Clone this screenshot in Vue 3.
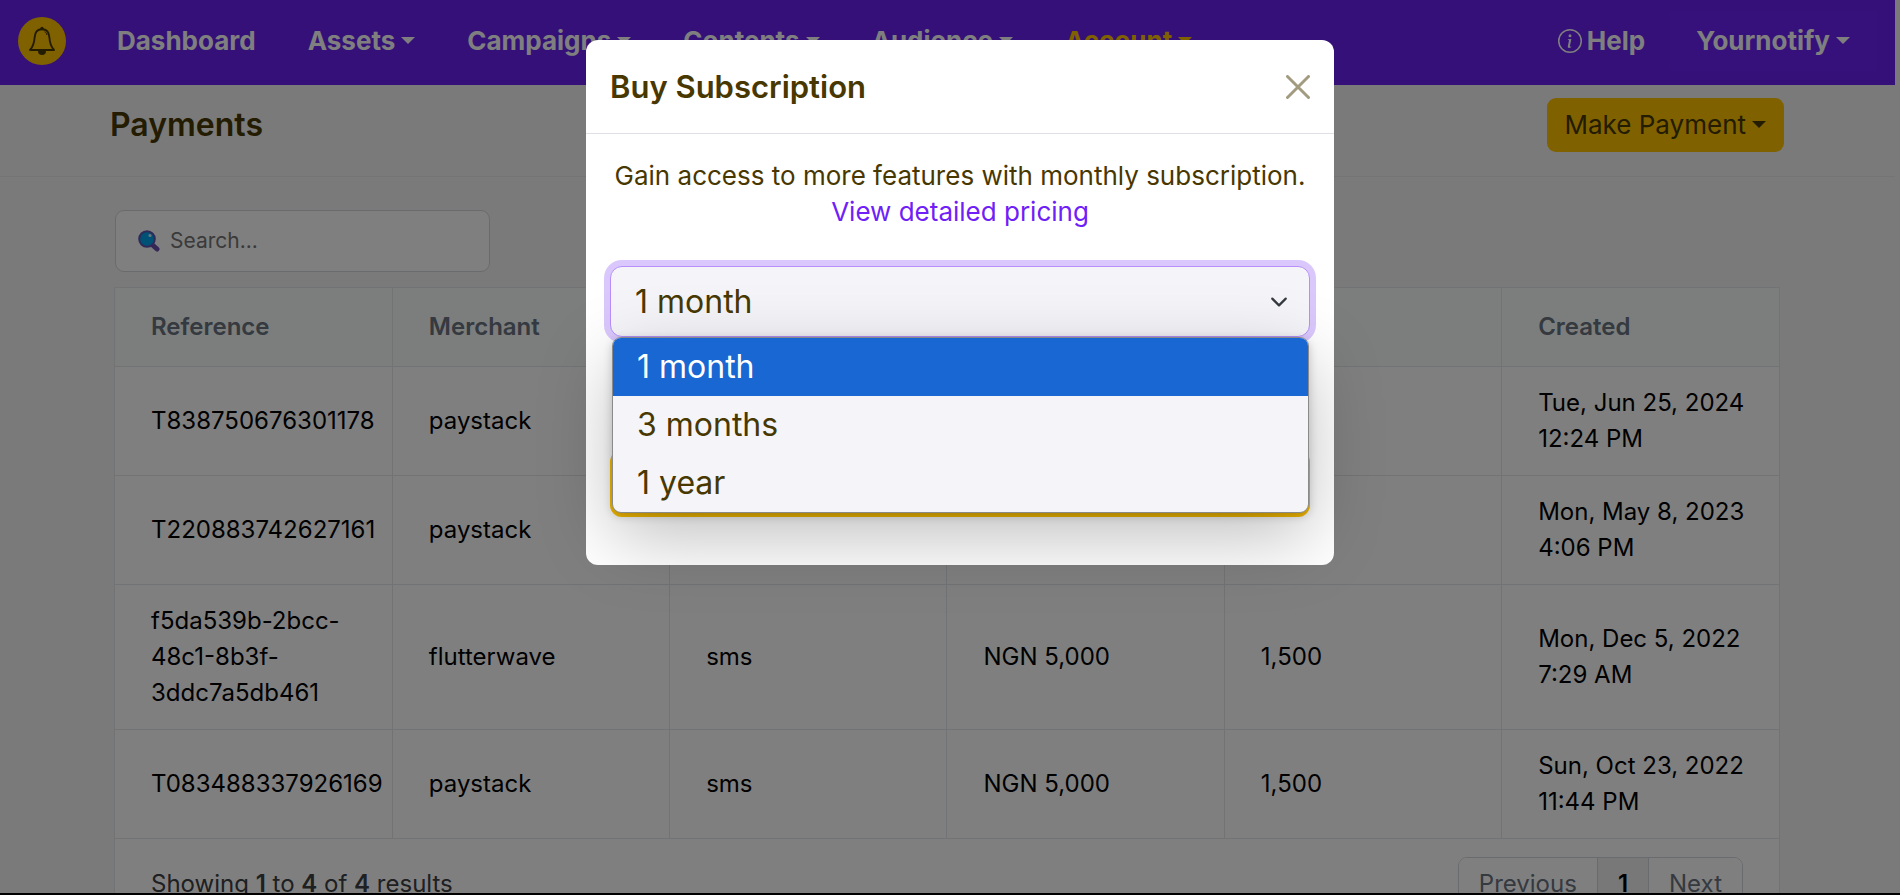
<script setup>
import { ref } from 'vue'

const term = ref('1 month')
const query = ref('')
const terms = ['1 month', '3 months', '1 year']
const links = [
  { label: 'Dashboard', menu: false },
  { label: 'Assets', menu: true },
  { label: 'Campaigns', menu: true },
  { label: 'Contents', menu: true },
  { label: 'Audience', menu: true },
  { label: 'Account', menu: true, active: true },
]
const columns = ['Reference', 'Merchant', 'Type', 'Amount', 'Units', 'Created']
const rows = [
  ['T838750676301178', 'paystack', 'sms', 'NGN 5,000', '1,500', 'Tue, Jun 25, 2024 12:24 PM'],
  ['T220883742627161', 'paystack', 'sms', 'NGN 5,000', '1,500', 'Mon, May 8, 2023 4:06 PM'],
  ['f5da539b-2bcc-48c1-8b3f-3ddc7a5db461', 'flutterwave', 'sms', 'NGN 5,000', '1,500', 'Mon, Dec 5, 2022 7:29 AM'],
  ['T083488337926169', 'paystack', 'sms', 'NGN 5,000', '1,500', 'Sun, Oct 23, 2022 11:44 PM'],
]
</script>

<template>
  <div class="screen">
    <div class="page">
      <header class="navbar">
        <a class="brand" href="#" aria-label="Home">
          <svg viewBox="0 0 48 48" width="48" height="48">
            <circle cx="24" cy="24" r="24" fill="#ffc200" />
            <path d="M12 33c3.200-3.500 4.300-7.500 4.600-12.500c.3-5.300 3-8.300 7.400-8.300s7.100 3 7.400 8.300c.3 5 1.400 9 4.600 12.500z" fill="none" stroke="#483800" stroke-width="1.900" stroke-linejoin="round" />
            <path d="M26.500 14.800c1.500.6 2.200 1.700 2.400 3.200" fill="none" stroke="#483800" stroke-width="1" />
            <circle cx="24" cy="11.500" r="1.700" fill="#483800" />
            <path d="M20 34h8a4 4 0 0 1-8 0z" fill="#483800" />
          </svg>
        </a>
        <nav class="links">
          <a v-for="l in links" :key="l.label" href="#" :class="['link', { active: l.active }]">{{ l.label }}<span v-if="l.menu" class="caret"></span></a>
        </nav>
        <div class="right">
          <a class="help" href="#">
            <svg viewBox="0 0 16 16" width="24" height="24" fill="currentColor">
              <path d="M8 15A7 7 0 1 1 8 1a7 7 0 0 1 0 14m0 1A8 8 0 1 0 8 0a8 8 0 0 0 0 16" />
              <path d="m8.930 6.588-2.290.287-.082.380.450.083c.294.070.352.176.288.469l-.738 3.468c-.194.897.105 1.319.808 1.319.545 0 1.178-.252 1.465-.598l.088-.416c-.2.176-.492.246-.686.246-.275 0-.375-.193-.304-.533zM9 4.500a1 1 0 1 1-2 0 1 1 0 0 1 2 0" />
            </svg>Help</a>
          <button class="user" type="button">Yournotify<span class="caret"></span></button>
        </div>
      </header>

      <section class="heading">
        <h1>Payments</h1>
        <button class="pay" type="button">Make Payment<span class="caret"></span></button>
      </section>

      <main class="content">
        <label class="search">
          <svg viewBox="0 0 22 22" width="22" height="22">
            <path d="M14.500 15l4.500 4" stroke="#6a4fb0" stroke-width="5" stroke-linecap="round" />
            <circle cx="9" cy="9" r="7.800" fill="#00a2ed" stroke="#5f55b0" stroke-width="2" />
            <circle cx="12" cy="5.500" r="1.500" fill="#d8f2ff" />
          </svg>
          <input v-model="query" type="text" placeholder="Search..." aria-label="Search" />
        </label>
        <div class="card">
          <table>
            <thead>
              <tr><th v-for="c in columns" :key="c">{{ c }}</th></tr>
            </thead>
            <tbody>
              <tr v-for="r in rows" :key="r[0]"><td v-for="(c, i) in r" :key="i">{{ c }}</td></tr>
            </tbody>
          </table>
          <footer class="foot">
            <div>Showing <b>1</b> to <b>4</b> of <b>4</b> results</div>
            <div class="pages">
              <button type="button">Previous</button><button type="button" class="current">1</button><button type="button">Next</button>
            </div>
          </footer>
        </div>
      </main>
    </div>

    <div class="backdrop">
      <div class="modal" role="dialog" aria-labelledby="dialog-title">
        <div class="modal-head">
          <h2 id="dialog-title">Buy Subscription</h2>
          <button class="close" type="button" aria-label="Close">
            <svg viewBox="0 0 24 24" width="24" height="24"><path d="M1.500 1.500l21 21M22.500 1.500l-21 21" stroke="currentColor" stroke-width="3" stroke-linecap="round" /></svg>
          </button>
        </div>
        <div class="modal-body">
          <p>Gain access to more features with monthly subscription.<br /><a href="#">View detailed pricing</a></p>
          <div class="picker">
            <select v-model="term" aria-label="Subscription period">
              <option v-for="t in terms" :key="t">{{ t }}</option>
            </select>
            <svg class="chevron" viewBox="0 0 16 16" width="18" height="18"><path d="m2 5 6 6 6-6" fill="none" stroke="#343a40" stroke-width="2" stroke-linecap="round" stroke-linejoin="round" /></svg>
            <ul class="options" role="listbox">
              <li v-for="t in terms" :key="t" role="option" :aria-selected="t === term" :class="{ chosen: t === term }" @click="term = t">{{ t }}</li>
            </ul>
          </div>
          <button class="buy" type="button" aria-label="Buy"></button>
        </div>
      </div>
    </div>
  </div>
</template>

<style>
body {
  margin: 0;
}
</style>

<style scoped>
* {
  box-sizing: border-box;
}
.screen {
  position: relative;
  height: 100vh;
  overflow: hidden;
  background: #f4f4f4;
  border-bottom: 2px solid #000;
  color: #483800;
  font: 400 24px/36px Inter, "Open Sans", sans-serif;
}
button {
  font: inherit;
  color: inherit;
  border: 0;
  cursor: pointer;
}
a {
  text-decoration: none;
}
.page {
  padding-right: 5px;
}
.caret {
  display: inline-block;
  margin-left: 6px;
  vertical-align: 6px;
  border-top: 7px solid;
  border-left: 7px solid transparent;
  border-right: 7px solid transparent;
}
.navbar {
  display: flex;
  align-items: center;
  height: 85px;
  padding: 0 18px 4px;
  background: #6820f0;
  color: #fff;
  font-size: 26px;
  font-weight: 700;
}
.brand,
.brand svg {
  display: block;
}
.links {
  display: flex;
  gap: 52px;
  margin-left: 51px;
}
.link,
.help {
  color: #fff;
}
.active {
  color: #ffc200;
}
.right {
  display: flex;
  align-items: center;
  gap: 24px;
  margin-left: auto;
}
.help {
  display: flex;
  align-items: center;
  gap: 5px;
}
.user {
  padding: 12px 27px;
  background: #6c21f6;
  font-weight: 700;
}
.heading {
  display: flex;
  align-items: center;
  justify-content: space-between;
  height: 92px;
  padding: 0 111px 12px 110px;
  border-bottom: 1px solid #e8e8e8;
}
h1,
h2 {
  margin: 0;
  font-size: 32px;
  line-height: 45px;
  font-weight: 600;
}
h2 {
  font-size: 31px;
}
.pay {
  padding: 9px 18px;
  border-radius: 9px;
  background: #ffc200;
  font-size: 26px;
}
.content {
  padding: 33px 115px 0 114px;
}
.search {
  display: flex;
  align-items: center;
  gap: 10px;
  width: 375px;
  height: 62px;
  margin-left: 1px;
  padding: 0 22px;
  border: 1px solid #d2d6dc;
  border-radius: 9px;
  background: #fff;
}
.search svg {
  flex: none;
}
.search input {
  width: 100%;
  padding: 0;
  border: 0;
  outline: 0;
  background: none;
  font: inherit;
  font-size: 21px;
}
.search input::placeholder {
  color: #757575;
  opacity: 1;
}
.card {
  margin-top: 15px;
  border: 1px solid #e5e7eb;
  background: #fff;
}
table {
  width: 100%;
  table-layout: fixed;
  border-collapse: collapse;
  color: #000;
}
th,
td {
  padding: 18px 10px 18px 36px;
  border-bottom: 1px solid #e5e7eb;
  border-right: 1px solid #e5e7eb;
  text-align: left;
}
td:last-child,
th:last-child {
  border-right: 0;
}
th {
  padding-top: 21px;
  padding-bottom: 21px;
  background: #f7fcfa;
  color: #6b7280;
  font-weight: 600;
}
.foot {
  display: flex;
  align-items: center;
  justify-content: space-between;
  padding: 18px 36px;
  color: #3d4044;
}
.foot b {
  font-weight: 600;
}
.pages {
  display: flex;
  border: 1px solid #d2d6dc;
  border-radius: 9px;
  overflow: hidden;
}
.pages button {
  padding: 8px 20px;
  background: #fff;
  color: #6b7280;
}
.pages .current {
  border-left: 1px solid #d2d6dc;
  border-right: 1px solid #d2d6dc;
  background: #f0f0f0;
  color: #000;
  font-weight: 600;
}
.backdrop {
  position: absolute;
  inset: 0;
  padding: 40px 0 0 20px;
  background: rgba(0, 0, 0, 0.5);
}
.modal {
  width: 748px;
  margin: 0 auto;
  border-radius: 12px;
  background: #fff;
}
.modal-head {
  display: flex;
  align-items: center;
  justify-content: space-between;
  padding: 24px;
  border-bottom: 1px solid #dee2e6;
}
.close {
  padding: 0;
  background: none;
  color: #a39b80;
}
.close svg {
  display: block;
}
.modal-body {
  padding: 24px 24px 48px;
}
p {
  margin: 0 0 36px;
  font-size: 26px;
  text-align: center;
}
p a {
  color: #6f20f8;
}
.picker {
  position: relative;
  margin-bottom: 113px;
}
select {
  display: block;
  width: 100%;
  height: 71px;
  padding: 0 24px;
  appearance: none;
  border: 1px solid #b68ffb;
  border-radius: 12px;
  outline: 0;
  background: #f5f5f9;
  box-shadow: 0 0 0 6px #dac8fd;
  color: inherit;
  font: inherit;
  font-size: 32px;
}
.chevron {
  position: absolute;
  top: 27px;
  right: 22px;
}
.options {
  position: absolute;
  z-index: 1;
  top: 100%;
  left: 2px;
  right: 1px;
  margin: 0;
  padding: 0;
  overflow: hidden;
  list-style: none;
  border: 1px solid #8a8a8a;
  border-radius: 9px;
  background: #f5f5f9;
  box-shadow: 0 3px 10px rgba(0, 0, 0, 0.2), 0 24px 72px rgba(0, 0, 0, 0.25);
  font-size: 32px;
  line-height: 58px;
}
.options li {
  padding: 0 24px;
}
.options .chosen {
  background: #1967d2;
  color: #fff;
}
.buy {
  display: block;
  width: 100%;
  height: 67px;
  border-radius: 12px;
  background: #ffc200;
}
</style>
